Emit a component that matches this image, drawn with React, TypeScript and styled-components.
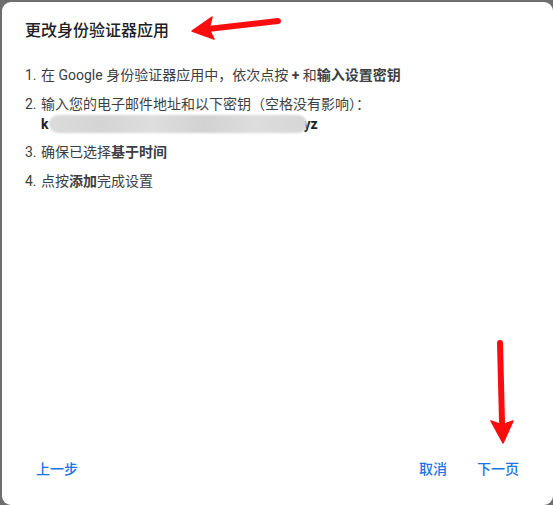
import styled, { createGlobalStyle } from 'styled-components';

const GlobalStyle = createGlobalStyle`
  html, body {
    margin: 0;
    padding: 0;
    background: #6e6e6e;
  }
  body {
    font-family: Roboto, "Noto Sans CJK SC", "Noto Sans", sans-serif;
    color: #202124;
  }
`;

const Stage = styled.div`
  position: relative;
  width: 553px;
  height: 505px;
  overflow: hidden;
  padding: 2px 0 0 2px;
  box-sizing: border-box;
`;

const Dialog = styled.div`
  width: 551px;
  height: 503px;
  background: #fff;
  border-radius: 9px;
  display: flex;
  flex-direction: column;
  box-sizing: border-box;
  padding: 17px 0 19px 0;
`;

const Title = styled.h2`
  margin: 0 0 22px 0;
  padding: 0 23px;
  font-size: 16px;
  line-height: 24px;
  font-weight: 500;
  color: #202124;
`;

const Steps = styled.ol`
  list-style: none;
  margin: 0;
  padding: 0 23px;
  display: flex;
  flex-direction: column;
  gap: 8.7px;
`;

const Step = styled.li`
  display: flex;
  font-size: 14px;
  line-height: 20px;
  color: #3c4043;
`;

const Num = styled.span`
  flex: 0 0 16px;
`;

const Body = styled.div`
  display: flex;
  flex-direction: column;
`;

const Secret = styled.div`
  display: flex;
  align-items: center;
  font-weight: 700;
  color: #202124;
`;

const Redacted = styled.span`
  position: relative;
  z-index: 1;
  display: inline-block;
  width: 258px;
  height: 18px;
  margin: 0 -4px 0 1px;
  border-radius: 9px;
  background: linear-gradient(90deg, #dcdcdc, #d4d4d4 20%, #dedede 40%, #d2d2d2 60%, #dddddd 80%, #d6d6d6);
  filter: blur(0.8px);
`;

const Footer = styled.div`
  margin-top: auto;
  display: flex;
  align-items: center;
  padding: 0 22px 0 22px;
`;

const Spacer = styled.div`
  flex: 1;
`;

const TextButton = styled.button<{ $gap?: number }>`
  border: 0;
  background: transparent;
  font-family: inherit;
  font-size: 14px;
  font-weight: 500;
  color: #1a73e8;
  height: 36px;
  padding: 0 12px;
  margin-left: ${(p) => p.$gap ?? 0}px;
  cursor: pointer;
`;

const Arrow = styled.svg`
  position: absolute;
  left: 0;
  top: 0;
  pointer-events: none;
`;

export default function App() {
  return (
    <>
      <GlobalStyle />
      <Stage>
        <Dialog>
          <Title>更改身份验证器应用</Title>
          <Steps>
            <Step>
              <Num>1.</Num>
              <Body>
                <span>
                  在 Google 身份验证器应用中，依次点按 <b>+</b> 和<b>输入设置密钥</b>
                </span>
              </Body>
            </Step>
            <Step>
              <Num>2.</Num>
              <Body>
                <span>输入您的电子邮件地址和以下密钥（空格没有影响）：</span>
                <Secret>
                  k<Redacted />yz
                </Secret>
              </Body>
            </Step>
            <Step>
              <Num>3.</Num>
              <Body>
                <span>
                  确保已选择<b>基于时间</b>
                </span>
              </Body>
            </Step>
            <Step>
              <Num>4.</Num>
              <Body>
                <span>
                  点按<b>添加</b>完成设置
                </span>
              </Body>
            </Step>
          </Steps>
          <Footer>
            <TextButton>上一步</TextButton>
            <Spacer />
            <TextButton>取消</TextButton>
            <TextButton $gap={6}>下一页</TextButton>
          </Footer>
        </Dialog>

        {/* red callout arrows */}
        <Arrow width="553" height="505" viewBox="0 0 553 505">
          <g fill="#fb0d0d" stroke="#fb0d0d" strokeLinecap="round" strokeLinejoin="round">
            <path d="M278 21 L208 29" strokeWidth="6" fill="none" />
            <path d="M192 31 L212 17 L209 29 L214 39 Z" strokeWidth="1.5" />
            <path d="M500 343 L502 422" strokeWidth="6" fill="none" />
            <path d="M503 443 L491 421 L502 425 L513 421 Z" strokeWidth="1.5" />
          </g>
        </Arrow>
      </Stage>
    </>
  );
}
